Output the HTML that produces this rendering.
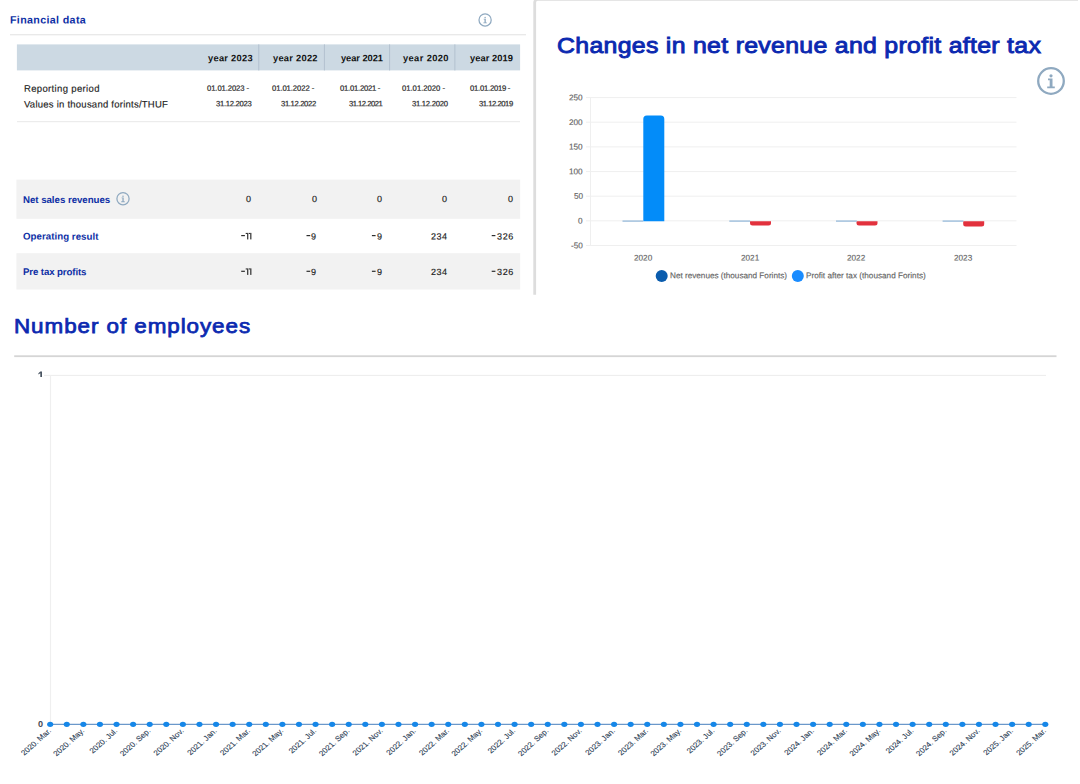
<!DOCTYPE html>
<html><head><meta charset="utf-8">
<title>Financial data</title>
<style>
html,body{margin:0;padding:0;background:#fff;}
body{width:1080px;height:784px;position:relative;overflow:hidden;font-family:"Liberation Sans",sans-serif;color:#222;}
.abs{position:absolute;white-space:nowrap;}
.t{position:absolute;white-space:nowrap;-webkit-text-stroke:0.15px currentColor;}
svg{position:absolute;left:0;top:0;}
</style></head><body>
<svg width="1080" height="784" viewBox="0 0 1080 784">
<rect x="10" y="34.2" width="516" height="1.1" fill="#e4e4e4"/>
<rect x="16.9" y="44.4" width="503.2" height="26" fill="#ccd9e3"/>
<g fill="#b5c3d1"><rect x="258.2" y="44.4" width="1.1" height="26"/><rect x="323.9" y="44.4" width="1.1" height="26"/><rect x="389" y="44.4" width="1.1" height="26"/><rect x="454.3" y="44.4" width="1.1" height="26"/></g>
<rect x="17" y="121.2" width="503" height="1" fill="#e8e8e8"/>
<rect x="16.4" y="179.6" width="503.8" height="39.2" fill="#f2f2f2"/>
<rect x="16.4" y="253.2" width="503.8" height="36.3" fill="#f2f2f2"/>
<path d="M534.7 294.8 V2.4 a3 3 0 0 1 3 -3 H1078" fill="none" stroke="#dddddd" stroke-width="2.8"/>
<rect x="14.2" y="355.3" width="1042.3" height="1.8" fill="#d5d5d5"/>
</svg>
<div class="t" style="left:10.40px;top:13px;font-size:10.70px;line-height:12px;letter-spacing:0.344px;font-weight:bold;-webkit-text-stroke:0;color:#0e2fa5;transform:translateY(0.40px) rotate(0.04deg) scale(1.0000,1.0000);transform-origin:0 10px;">Financial data</div>
<div class="t" style="left:207.50px;top:53px;font-size:9.30px;line-height:10px;letter-spacing:0.274px;font-weight:bold;-webkit-text-stroke:0;color:#111;transform:translateY(0.30px) rotate(0.04deg) scale(1.0000,1.0000);transform-origin:0 8px;">year 2023</div>
<div class="t" style="left:272.50px;top:53px;font-size:9.30px;line-height:10px;letter-spacing:0.261px;font-weight:bold;-webkit-text-stroke:0;color:#111;transform:translateY(0.30px) rotate(0.04deg) scale(1.0000,1.0000);transform-origin:0 8px;">year 2022</div>
<div class="t" style="left:340.50px;top:53px;font-size:9.30px;line-height:10px;letter-spacing:-0.051px;font-weight:bold;-webkit-text-stroke:0;color:#111;transform:translateY(0.30px) rotate(0.04deg) scale(1.0000,1.0000);transform-origin:0 8px;">year 2021</div>
<div class="t" style="left:402.50px;top:53px;font-size:9.30px;line-height:10px;letter-spacing:0.386px;font-weight:bold;-webkit-text-stroke:0;color:#111;transform:translateY(0.30px) rotate(0.04deg) scale(1.0000,1.0000);transform-origin:0 8px;">year 2020</div>
<div class="t" style="left:470.00px;top:53px;font-size:9.30px;line-height:10px;letter-spacing:0.074px;font-weight:bold;-webkit-text-stroke:0;color:#111;transform:translateY(0.30px) rotate(0.04deg) scale(1.0000,1.0000);transform-origin:0 8px;">year 2019</div>
<div class="t" style="left:206.90px;top:83px;font-size:7.70px;line-height:9px;letter-spacing:-0.103px;color:#2a2a2a;transform:translateY(0.70px) rotate(0.04deg) scale(1.0000,1.0000);transform-origin:0 7px;-webkit-text-stroke:0.2px #2a2a2a;">01.01.2023 -</div>
<div class="t" style="left:272.10px;top:83px;font-size:7.70px;line-height:9px;letter-spacing:-0.085px;color:#2a2a2a;transform:translateY(0.70px) rotate(0.04deg) scale(1.0000,1.0000);transform-origin:0 7px;-webkit-text-stroke:0.2px #2a2a2a;">01.01.2022 -</div>
<div class="t" style="left:339.50px;top:83px;font-size:7.70px;line-height:9px;letter-spacing:-0.249px;color:#2a2a2a;transform:translateY(0.70px) rotate(0.04deg) scale(1.0000,1.0000);transform-origin:0 7px;-webkit-text-stroke:0.2px #2a2a2a;">01.01.2021 -</div>
<div class="t" style="left:402.00px;top:83px;font-size:7.70px;line-height:9px;letter-spacing:-0.021px;color:#2a2a2a;transform:translateY(0.70px) rotate(0.04deg) scale(1.0000,1.0000);transform-origin:0 7px;-webkit-text-stroke:0.2px #2a2a2a;">01.01.2020 -</div>
<div class="t" style="left:469.50px;top:83px;font-size:7.70px;line-height:9px;letter-spacing:-0.249px;color:#2a2a2a;transform:translateY(0.70px) rotate(0.04deg) scale(1.0000,1.0000);transform-origin:0 7px;-webkit-text-stroke:0.2px #2a2a2a;">01.01.2019 -</div>
<div class="t" style="left:216.00px;top:99px;font-size:7.70px;line-height:9px;letter-spacing:-0.293px;color:#2a2a2a;transform:translateY(0.30px) rotate(0.04deg) scale(1.0000,1.0000);transform-origin:0 7px;-webkit-text-stroke:0.2px #2a2a2a;">31.12.2023</div>
<div class="t" style="left:281.25px;top:99px;font-size:7.70px;line-height:9px;letter-spacing:-0.365px;color:#2a2a2a;transform:translateY(0.30px) rotate(0.04deg) scale(1.0000,1.0000);transform-origin:0 7px;-webkit-text-stroke:0.2px #2a2a2a;">31.12.2022</div>
<div class="t" style="left:348.75px;top:99px;font-size:7.70px;line-height:9px;letter-spacing:-0.532px;color:#2a2a2a;transform:translateY(0.30px) rotate(0.04deg) scale(1.0000,1.0000);transform-origin:0 7px;-webkit-text-stroke:0.2px #2a2a2a;">31.12.2021</div>
<div class="t" style="left:412.00px;top:99px;font-size:7.70px;line-height:9px;letter-spacing:-0.282px;color:#2a2a2a;transform:translateY(0.30px) rotate(0.04deg) scale(1.0000,1.0000);transform-origin:0 7px;-webkit-text-stroke:0.2px #2a2a2a;">31.12.2020</div>
<div class="t" style="left:478.75px;top:99px;font-size:7.70px;line-height:9px;letter-spacing:-0.476px;color:#2a2a2a;transform:translateY(0.30px) rotate(0.04deg) scale(1.0000,1.0000);transform-origin:0 7px;-webkit-text-stroke:0.2px #2a2a2a;">31.12.2019</div>
<div class="t" style="left:23.70px;top:82px;font-size:9.50px;line-height:11px;letter-spacing:0.350px;color:#222;transform:translateY(0.80px) rotate(0.04deg) scale(1.0000,1.0000);transform-origin:0 9px;">Reporting period</div>
<div class="t" style="left:23.70px;top:98px;font-size:9.50px;line-height:11px;letter-spacing:0.241px;color:#222;transform:translateY(0.50px) rotate(0.04deg) scale(1.0000,1.0000);transform-origin:0 9px;">Values in thousand forints/THUF</div>
<div class="t" style="left:23.40px;top:193px;font-size:9.70px;line-height:11px;letter-spacing:-0.034px;font-weight:bold;-webkit-text-stroke:0;color:#0e2fa5;transform:translateY(0.90px) rotate(0.04deg) scale(1.0000,1.0000);transform-origin:0 9px;">Net sales revenues</div>
<div class="t" style="left:23.40px;top:230px;font-size:9.70px;line-height:11px;letter-spacing:0.038px;font-weight:bold;-webkit-text-stroke:0;color:#0e2fa5;transform:translateY(0.60px) rotate(0.04deg) scale(1.0000,1.0000);transform-origin:0 9px;">Operating result</div>
<div class="t" style="left:23.40px;top:266px;font-size:9.70px;line-height:11px;letter-spacing:-0.117px;font-weight:bold;-webkit-text-stroke:0;color:#0e2fa5;transform:translateY(0.10px) rotate(0.04deg) scale(1.0000,1.0000);transform-origin:0 9px;">Pre tax profits</div>
<svg width="1080" height="784"><rect x="241.20" y="235.00" width="3.7" height="1.2" fill="#2e2e2e"/></svg>
<svg width="1080" height="784"><rect x="250.25" y="232.90" width="1.15" height="6.5" fill="#262626"/><rect x="248.80" y="232.90" width="1.5" height="1.1" fill="#333"/></svg>
<svg width="1080" height="784"><rect x="247.15" y="232.90" width="1.15" height="6.5" fill="#262626"/><rect x="245.70" y="232.90" width="1.5" height="1.1" fill="#333"/></svg>
<svg width="1080" height="784"><rect x="306.50" y="235.00" width="3.7" height="1.2" fill="#2e2e2e"/></svg>
<div class="t" style="left:311.40px;top:231px;font-size:9.00px;line-height:10px;letter-spacing:0.000px;color:#222;transform:translateY(0.40px) rotate(0.04deg) scale(1.0000,1.0000);transform-origin:0 8px;">9</div>
<svg width="1080" height="784"><rect x="371.90" y="235.00" width="3.7" height="1.2" fill="#2e2e2e"/></svg>
<div class="t" style="left:376.80px;top:231px;font-size:9.00px;line-height:10px;letter-spacing:0.000px;color:#222;transform:translateY(0.40px) rotate(0.04deg) scale(1.0000,1.0000);transform-origin:0 8px;">9</div>
<div class="t" style="left:431.40px;top:231px;font-size:9.00px;line-height:10px;letter-spacing:0.535px;color:#222;transform:translateY(0.40px) rotate(0.04deg) scale(1.0000,1.0000);transform-origin:0 8px;">234</div>
<svg width="1080" height="784"><rect x="491.70" y="235.00" width="3.7" height="1.2" fill="#2e2e2e"/></svg>
<div class="t" style="left:496.60px;top:231px;font-size:9.00px;line-height:10px;letter-spacing:0.635px;color:#222;transform:translateY(0.40px) rotate(0.04deg) scale(1.0000,1.0000);transform-origin:0 8px;">326</div>
<svg width="1080" height="784"><rect x="241.20" y="270.70" width="3.7" height="1.2" fill="#2e2e2e"/></svg>
<svg width="1080" height="784"><rect x="250.25" y="268.40" width="1.15" height="6.5" fill="#262626"/><rect x="248.80" y="268.40" width="1.5" height="1.1" fill="#333"/></svg>
<svg width="1080" height="784"><rect x="247.15" y="268.40" width="1.15" height="6.5" fill="#262626"/><rect x="245.70" y="268.40" width="1.5" height="1.1" fill="#333"/></svg>
<svg width="1080" height="784"><rect x="306.50" y="270.70" width="3.7" height="1.2" fill="#2e2e2e"/></svg>
<div class="t" style="left:311.40px;top:266px;font-size:9.00px;line-height:10px;letter-spacing:0.000px;color:#222;transform:translateY(0.90px) rotate(0.04deg) scale(1.0000,1.0000);transform-origin:0 8px;">9</div>
<svg width="1080" height="784"><rect x="371.90" y="270.70" width="3.7" height="1.2" fill="#2e2e2e"/></svg>
<div class="t" style="left:376.80px;top:266px;font-size:9.00px;line-height:10px;letter-spacing:0.000px;color:#222;transform:translateY(0.90px) rotate(0.04deg) scale(1.0000,1.0000);transform-origin:0 8px;">9</div>
<div class="t" style="left:431.40px;top:266px;font-size:9.00px;line-height:10px;letter-spacing:0.535px;color:#222;transform:translateY(0.90px) rotate(0.04deg) scale(1.0000,1.0000);transform-origin:0 8px;">234</div>
<svg width="1080" height="784"><rect x="491.70" y="270.70" width="3.7" height="1.2" fill="#2e2e2e"/></svg>
<div class="t" style="left:496.60px;top:266px;font-size:9.00px;line-height:10px;letter-spacing:0.635px;color:#222;transform:translateY(0.90px) rotate(0.04deg) scale(1.0000,1.0000);transform-origin:0 8px;">326</div>
<div class="t" style="left:246.30px;top:193px;font-size:9.00px;line-height:10px;letter-spacing:0.000px;color:#222;transform:translateY(0.90px) rotate(0.04deg) scale(1.0000,1.0000);transform-origin:0 8px;">0</div>
<div class="t" style="left:311.60px;top:193px;font-size:9.00px;line-height:10px;letter-spacing:0.000px;color:#222;transform:translateY(0.90px) rotate(0.04deg) scale(1.0000,1.0000);transform-origin:0 8px;">0</div>
<div class="t" style="left:377.00px;top:193px;font-size:9.00px;line-height:10px;letter-spacing:0.000px;color:#222;transform:translateY(0.90px) rotate(0.04deg) scale(1.0000,1.0000);transform-origin:0 8px;">0</div>
<div class="t" style="left:442.10px;top:193px;font-size:9.00px;line-height:10px;letter-spacing:0.000px;color:#222;transform:translateY(0.90px) rotate(0.04deg) scale(1.0000,1.0000);transform-origin:0 8px;">0</div>
<div class="t" style="left:507.50px;top:193px;font-size:9.00px;line-height:10px;letter-spacing:0.000px;color:#222;transform:translateY(0.90px) rotate(0.04deg) scale(1.0000,1.0000);transform-origin:0 8px;">0</div>
<div class="t" style="left:556.90px;top:33px;font-size:22.20px;line-height:25px;letter-spacing:0.272px;color:#0b29b0;transform:scale(1.1200,1.0000);transform-origin:0 20px;-webkit-text-stroke:0.9px #0b29b0;">Changes in net revenue and profit after tax</div>
<div class="t" style="left:14.10px;top:315px;font-size:20.20px;line-height:22px;letter-spacing:0.846px;color:#0b29b0;transform:scale(1.1100,1.0000);transform-origin:0 18px;-webkit-text-stroke:0.75px #0b29b0;">Number of employees</div>
<div class="t" style="left:568.91px;top:93px;font-size:8.20px;line-height:9px;letter-spacing:-0.000px;color:#666;transform:translateY(0.25px) rotate(0.04deg) scale(1.0000,1.0000);transform-origin:0 7px;">250</div>
<div class="t" style="left:568.91px;top:117px;font-size:8.20px;line-height:9px;letter-spacing:-0.000px;color:#666;transform:translateY(0.90px) rotate(0.04deg) scale(1.0000,1.0000);transform-origin:0 7px;">200</div>
<div class="t" style="left:568.91px;top:142px;font-size:8.20px;line-height:9px;letter-spacing:-0.000px;color:#666;transform:translateY(0.55px) rotate(0.04deg) scale(1.0000,1.0000);transform-origin:0 7px;">150</div>
<div class="t" style="left:568.91px;top:167px;font-size:8.20px;line-height:9px;letter-spacing:-0.000px;color:#666;transform:translateY(0.20px) rotate(0.04deg) scale(1.0000,1.0000);transform-origin:0 7px;">100</div>
<div class="t" style="left:573.50px;top:191px;font-size:8.20px;line-height:9px;letter-spacing:-0.000px;color:#666;transform:translateY(0.85px) rotate(0.04deg) scale(1.0000,1.0000);transform-origin:0 7px;">50</div>
<div class="t" style="left:578.05px;top:216px;font-size:8.20px;line-height:9px;letter-spacing:0.000px;color:#666;transform:translateY(0.50px) rotate(0.04deg) scale(1.0000,1.0000);transform-origin:0 7px;">0</div>
<div class="t" style="left:570.75px;top:241px;font-size:8.20px;line-height:9px;letter-spacing:0.000px;color:#666;transform:translateY(0.15px) rotate(0.04deg) scale(1.0000,1.0000);transform-origin:0 7px;">-50</div>
<div class="t" style="left:634.18px;top:253px;font-size:8.20px;line-height:9px;letter-spacing:-0.000px;color:#666;transform:translateY(0.50px) rotate(0.04deg) scale(1.0000,1.0000);transform-origin:0 7px;">2020</div>
<div class="t" style="left:740.68px;top:253px;font-size:8.20px;line-height:9px;letter-spacing:-0.000px;color:#666;transform:translateY(0.50px) rotate(0.04deg) scale(1.0000,1.0000);transform-origin:0 7px;">2021</div>
<div class="t" style="left:847.48px;top:253px;font-size:8.20px;line-height:9px;letter-spacing:-0.000px;color:#666;transform:translateY(0.50px) rotate(0.04deg) scale(1.0000,1.0000);transform-origin:0 7px;">2022</div>
<div class="t" style="left:954.08px;top:253px;font-size:8.20px;line-height:9px;letter-spacing:-0.000px;color:#666;transform:translateY(0.50px) rotate(0.04deg) scale(1.0000,1.0000);transform-origin:0 7px;">2023</div>
<div class="t" style="left:670.00px;top:271px;font-size:8.20px;line-height:9px;letter-spacing:-0.013px;color:#666;transform:translateY(0.20px) rotate(0.04deg) scale(1.0000,1.0000);transform-origin:0 7px;">Net revenues (thousand Forints)</div>
<div class="t" style="left:806.10px;top:271px;font-size:8.20px;line-height:9px;letter-spacing:0.003px;color:#666;transform:translateY(0.20px) rotate(0.04deg) scale(1.0000,1.0000);transform-origin:0 7px;">Profit after tax (thousand Forints)</div>
<svg width="1080" height="784" viewBox="0 0 1080 784">
<line x1="586" y1="97.6" x2="1016.5" y2="97.6" stroke="#efefef" stroke-width="1"/>
<line x1="586" y1="122.2" x2="1016.5" y2="122.2" stroke="#efefef" stroke-width="1"/>
<line x1="586" y1="146.9" x2="1016.5" y2="146.9" stroke="#efefef" stroke-width="1"/>
<line x1="586" y1="171.6" x2="1016.5" y2="171.6" stroke="#efefef" stroke-width="1"/>
<line x1="586" y1="196.2" x2="1016.5" y2="196.2" stroke="#efefef" stroke-width="1"/>
<line x1="586" y1="220.8" x2="1016.5" y2="220.8" stroke="#efefef" stroke-width="1"/>
<line x1="586" y1="245.5" x2="1016.5" y2="245.5" stroke="#efefef" stroke-width="1"/>
<line x1="590.5" y1="97.6" x2="590.5" y2="245.5" stroke="#efefef" stroke-width="1"/>
<path d="M643.3 221.3 V119 a3.5 3.5 0 0 1 3.5 -3.5 h14 a3.5 3.5 0 0 1 3.5 3.5 V221.3 Z" fill="#038cf9"/>
<path d="M750.0 221.3 h21 v1.8 a2.5 2.5 0 0 1 -2.5 2.5 h-16 a2.5 2.5 0 0 1 -2.5 -2.5 Z" fill="#e2313d"/>
<path d="M856.5 221.3 h21 v1.8 a2.5 2.5 0 0 1 -2.5 2.5 h-16 a2.5 2.5 0 0 1 -2.5 -2.5 Z" fill="#e2313d"/>
<path d="M963.2 221.3 h21 v2.8 a2.5 2.5 0 0 1 -2.5 2.5 h-16 a2.5 2.5 0 0 1 -2.5 -2.5 Z" fill="#e2313d"/>
<rect x="622.5" y="220.4" width="20.8" height="1.4" fill="#9ebfdc"/>
<rect x="729.3" y="220.4" width="20.8" height="1.4" fill="#9ebfdc"/>
<rect x="836.0" y="220.4" width="20.8" height="1.4" fill="#9ebfdc"/>
<rect x="942.6" y="220.4" width="20.8" height="1.4" fill="#9ebfdc"/>
<circle cx="661.7" cy="276" r="6" fill="#0a5cad"/><circle cx="797.8" cy="276" r="6" fill="#1a8cff"/>
<g transform="translate(1051.0,81.0)"><circle r="12.80" fill="none" stroke="#8fa9c0" stroke-width="2.30"/><g transform="scale(1.000)" fill="#8fa9c0"><circle cx="0" cy="-5.2" r="1.6"/><path d="M-3 -2.6 h4.5 v8 h2.3 v1.9 h-7.6 v-1.9 h2.5 v-6.1 h-1.7 z"/></g></g>
<g transform="translate(485.1,19.9)"><circle r="6.10" fill="none" stroke="#8fa9c0" stroke-width="1.25"/><g transform="scale(0.470)" fill="#8fa9c0"><circle cx="0" cy="-5.2" r="1.6"/><path d="M-3 -2.6 h4.5 v8 h2.3 v1.9 h-7.6 v-1.9 h2.5 v-6.1 h-1.7 z"/></g></g>
<g transform="translate(123.0,198.7)"><circle r="6.10" fill="none" stroke="#8fa9c0" stroke-width="1.25"/><g transform="scale(0.470)" fill="#8fa9c0"><circle cx="0" cy="-5.2" r="1.6"/><path d="M-3 -2.6 h4.5 v8 h2.3 v1.9 h-7.6 v-1.9 h2.5 v-6.1 h-1.7 z"/></g></g>
<line x1="44" y1="375.4" x2="1046" y2="375.4" stroke="#ececec" stroke-width="1"/>
<line x1="50.5" y1="375.4" x2="50.5" y2="724.5" stroke="#efefef" stroke-width="1.2"/>
<line x1="50.2" y1="724.3" x2="1045.3" y2="724.3" stroke="#6b98ca" stroke-width="1.3"/>
<g fill="#1687e8"><ellipse cx="50.20" cy="724.3" rx="3.05" ry="2.6"/><ellipse cx="66.78" cy="724.3" rx="3.05" ry="2.6"/><ellipse cx="83.37" cy="724.3" rx="3.05" ry="2.6"/><ellipse cx="99.95" cy="724.3" rx="3.05" ry="2.6"/><ellipse cx="116.54" cy="724.3" rx="3.05" ry="2.6"/><ellipse cx="133.12" cy="724.3" rx="3.05" ry="2.6"/><ellipse cx="149.71" cy="724.3" rx="3.05" ry="2.6"/><ellipse cx="166.29" cy="724.3" rx="3.05" ry="2.6"/><ellipse cx="182.88" cy="724.3" rx="3.05" ry="2.6"/><ellipse cx="199.46" cy="724.3" rx="3.05" ry="2.6"/><ellipse cx="216.05" cy="724.3" rx="3.05" ry="2.6"/><ellipse cx="232.63" cy="724.3" rx="3.05" ry="2.6"/><ellipse cx="249.22" cy="724.3" rx="3.05" ry="2.6"/><ellipse cx="265.80" cy="724.3" rx="3.05" ry="2.6"/><ellipse cx="282.39" cy="724.3" rx="3.05" ry="2.6"/><ellipse cx="298.97" cy="724.3" rx="3.05" ry="2.6"/><ellipse cx="315.56" cy="724.3" rx="3.05" ry="2.6"/><ellipse cx="332.14" cy="724.3" rx="3.05" ry="2.6"/><ellipse cx="348.73" cy="724.3" rx="3.05" ry="2.6"/><ellipse cx="365.31" cy="724.3" rx="3.05" ry="2.6"/><ellipse cx="381.90" cy="724.3" rx="3.05" ry="2.6"/><ellipse cx="398.48" cy="724.3" rx="3.05" ry="2.6"/><ellipse cx="415.07" cy="724.3" rx="3.05" ry="2.6"/><ellipse cx="431.65" cy="724.3" rx="3.05" ry="2.6"/><ellipse cx="448.24" cy="724.3" rx="3.05" ry="2.6"/><ellipse cx="464.82" cy="724.3" rx="3.05" ry="2.6"/><ellipse cx="481.41" cy="724.3" rx="3.05" ry="2.6"/><ellipse cx="497.99" cy="724.3" rx="3.05" ry="2.6"/><ellipse cx="514.58" cy="724.3" rx="3.05" ry="2.6"/><ellipse cx="531.16" cy="724.3" rx="3.05" ry="2.6"/><ellipse cx="547.75" cy="724.3" rx="3.05" ry="2.6"/><ellipse cx="564.33" cy="724.3" rx="3.05" ry="2.6"/><ellipse cx="580.92" cy="724.3" rx="3.05" ry="2.6"/><ellipse cx="597.50" cy="724.3" rx="3.05" ry="2.6"/><ellipse cx="614.09" cy="724.3" rx="3.05" ry="2.6"/><ellipse cx="630.67" cy="724.3" rx="3.05" ry="2.6"/><ellipse cx="647.26" cy="724.3" rx="3.05" ry="2.6"/><ellipse cx="663.84" cy="724.3" rx="3.05" ry="2.6"/><ellipse cx="680.43" cy="724.3" rx="3.05" ry="2.6"/><ellipse cx="697.01" cy="724.3" rx="3.05" ry="2.6"/><ellipse cx="713.60" cy="724.3" rx="3.05" ry="2.6"/><ellipse cx="730.18" cy="724.3" rx="3.05" ry="2.6"/><ellipse cx="746.77" cy="724.3" rx="3.05" ry="2.6"/><ellipse cx="763.35" cy="724.3" rx="3.05" ry="2.6"/><ellipse cx="779.94" cy="724.3" rx="3.05" ry="2.6"/><ellipse cx="796.52" cy="724.3" rx="3.05" ry="2.6"/><ellipse cx="813.11" cy="724.3" rx="3.05" ry="2.6"/><ellipse cx="829.69" cy="724.3" rx="3.05" ry="2.6"/><ellipse cx="846.28" cy="724.3" rx="3.05" ry="2.6"/><ellipse cx="862.86" cy="724.3" rx="3.05" ry="2.6"/><ellipse cx="879.45" cy="724.3" rx="3.05" ry="2.6"/><ellipse cx="896.03" cy="724.3" rx="3.05" ry="2.6"/><ellipse cx="912.62" cy="724.3" rx="3.05" ry="2.6"/><ellipse cx="929.20" cy="724.3" rx="3.05" ry="2.6"/><ellipse cx="945.79" cy="724.3" rx="3.05" ry="2.6"/><ellipse cx="962.37" cy="724.3" rx="3.05" ry="2.6"/><ellipse cx="978.96" cy="724.3" rx="3.05" ry="2.6"/><ellipse cx="995.54" cy="724.3" rx="3.05" ry="2.6"/><ellipse cx="1012.13" cy="724.3" rx="3.05" ry="2.6"/><ellipse cx="1028.71" cy="724.3" rx="3.05" ry="2.6"/><ellipse cx="1045.30" cy="724.3" rx="3.05" ry="2.6"/></g>
<g font-family="Liberation Sans, sans-serif" font-size="7.3" fill="#2f4358" stroke="#2f4358" stroke-width="0.12"><text transform="translate(51.60,731.4) scale(1.12,1) rotate(-45)" text-anchor="end">2020. Mar.</text>
<text transform="translate(84.77,731.4) scale(1.12,1) rotate(-45)" text-anchor="end">2020. May.</text>
<text transform="translate(117.94,731.4) scale(1.12,1) rotate(-45)" text-anchor="end">2020. Jul.</text>
<text transform="translate(151.11,731.4) scale(1.12,1) rotate(-45)" text-anchor="end">2020. Sep.</text>
<text transform="translate(184.28,731.4) scale(1.12,1) rotate(-45)" text-anchor="end">2020. Nov.</text>
<text transform="translate(217.45,731.4) scale(1.12,1) rotate(-45)" text-anchor="end">2021. Jan.</text>
<text transform="translate(250.62,731.4) scale(1.12,1) rotate(-45)" text-anchor="end">2021. Mar.</text>
<text transform="translate(283.79,731.4) scale(1.12,1) rotate(-45)" text-anchor="end">2021. May.</text>
<text transform="translate(316.96,731.4) scale(1.12,1) rotate(-45)" text-anchor="end">2021. Jul.</text>
<text transform="translate(350.13,731.4) scale(1.12,1) rotate(-45)" text-anchor="end">2021. Sep.</text>
<text transform="translate(383.30,731.4) scale(1.12,1) rotate(-45)" text-anchor="end">2021. Nov.</text>
<text transform="translate(416.47,731.4) scale(1.12,1) rotate(-45)" text-anchor="end">2022. Jan.</text>
<text transform="translate(449.64,731.4) scale(1.12,1) rotate(-45)" text-anchor="end">2022. Mar.</text>
<text transform="translate(482.81,731.4) scale(1.12,1) rotate(-45)" text-anchor="end">2022. May.</text>
<text transform="translate(515.98,731.4) scale(1.12,1) rotate(-45)" text-anchor="end">2022. Jul.</text>
<text transform="translate(549.15,731.4) scale(1.12,1) rotate(-45)" text-anchor="end">2022. Sep.</text>
<text transform="translate(582.32,731.4) scale(1.12,1) rotate(-45)" text-anchor="end">2022. Nov.</text>
<text transform="translate(615.49,731.4) scale(1.12,1) rotate(-45)" text-anchor="end">2023. Jan.</text>
<text transform="translate(648.66,731.4) scale(1.12,1) rotate(-45)" text-anchor="end">2023. Mar.</text>
<text transform="translate(681.83,731.4) scale(1.12,1) rotate(-45)" text-anchor="end">2023. May.</text>
<text transform="translate(715.00,731.4) scale(1.12,1) rotate(-45)" text-anchor="end">2023. Jul.</text>
<text transform="translate(748.17,731.4) scale(1.12,1) rotate(-45)" text-anchor="end">2023. Sep.</text>
<text transform="translate(781.34,731.4) scale(1.12,1) rotate(-45)" text-anchor="end">2023. Nov.</text>
<text transform="translate(814.51,731.4) scale(1.12,1) rotate(-45)" text-anchor="end">2024. Jan.</text>
<text transform="translate(847.68,731.4) scale(1.12,1) rotate(-45)" text-anchor="end">2024. Mar.</text>
<text transform="translate(880.85,731.4) scale(1.12,1) rotate(-45)" text-anchor="end">2024. May.</text>
<text transform="translate(914.02,731.4) scale(1.12,1) rotate(-45)" text-anchor="end">2024. Jul.</text>
<text transform="translate(947.19,731.4) scale(1.12,1) rotate(-45)" text-anchor="end">2024. Sep.</text>
<text transform="translate(980.36,731.4) scale(1.12,1) rotate(-45)" text-anchor="end">2024. Nov.</text>
<text transform="translate(1013.53,731.4) scale(1.12,1) rotate(-45)" text-anchor="end">2025. Jan.</text>
<text transform="translate(1046.70,731.4) scale(1.12,1) rotate(-45)" text-anchor="end">2025. Mar.</text></g>
<path d="M40.3 371.5 H42 V376.9 H40.3 V373.3 L38.4 374.4 V373.2 L40.3 371.5 Z" fill="#4a5562"/>
<text transform="translate(43.1,726.9) scale(1.06,1)" text-anchor="end" font-family="Liberation Sans, sans-serif" font-size="8.6" font-weight="bold" fill="#454a55">0</text>
</svg>
</body></html>
